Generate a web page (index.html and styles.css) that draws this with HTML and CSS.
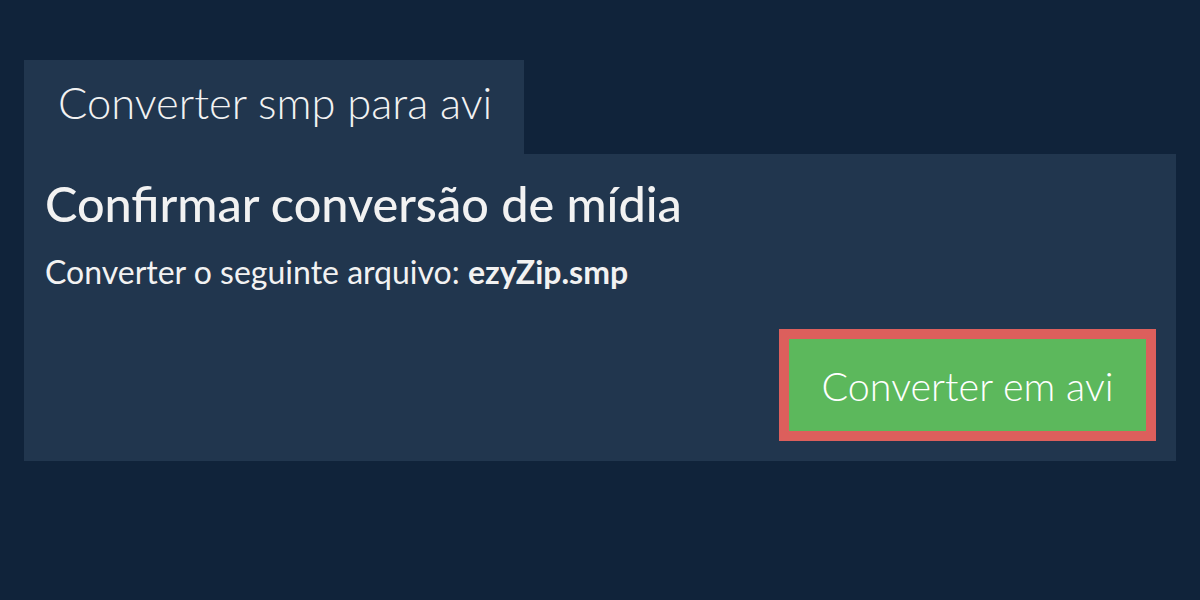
FILE: index.html
```html
<!DOCTYPE html>
<html lang="pt">
<head>
<meta charset="utf-8">
<link rel="stylesheet" href="styles.css">
</head>
<body>
<main class="wrap">
  <div class="tab">Converter smp para avi</div>
  <section class="panel">
    <h1 class="title">Confirmar conversão de mídia</h1>
    <p class="line">Converter o seguinte arquivo: <strong>ezyZip.smp</strong></p>
    <div class="actions">
      <button class="btn" type="button">Converter em avi</button>
    </div>
  </section>
</main>
</body>
</html>
```

FILE: styles.css
```css
html, body {
  margin: 0;
  padding: 0;
}
body {
  background: #10233a;
  font-family: Lato, "Open Sans", sans-serif;
  color: #f2f2f2;
  width: 1200px;
  height: 600px;
  overflow: hidden;
}
.wrap {
  padding: 60px 24px 0 24px;
  display: flex;
  flex-direction: column;
  align-items: flex-start;
}
.tab {
  width: 500px;
  height: 94px;
  box-sizing: border-box;
  background: #21364e;
  padding: 12px 0 0 34px;
  font-size: 43.5px;
  font-weight: 300;
  line-height: 60px;
}
.panel {
  align-self: stretch;
  background: #21364e;
  padding: 20px 20px 20px 21px;
  display: flex;
  flex-direction: column;
}
.title {
  margin: 0;
  font-size: 48.6px;
  font-weight: 500;
  line-height: 58px;
}
.line {
  margin: 20px 0 0 0;
  font-size: 32px;
  line-height: 40px;
}
.line strong {
  font-weight: 700;
}
.actions {
  display: flex;
  justify-content: flex-end;
  margin-top: 37px;
}
.btn {
  width: 377px;
  height: 112px;
  box-sizing: border-box;
  background: #5cb85c;
  border: 10px solid #dc5f5c;
  color: #ffffff;
  font-family: Lato, "Open Sans", sans-serif;
  font-size: 39.5px;
  font-weight: 300;
  padding: 0;
}
```
